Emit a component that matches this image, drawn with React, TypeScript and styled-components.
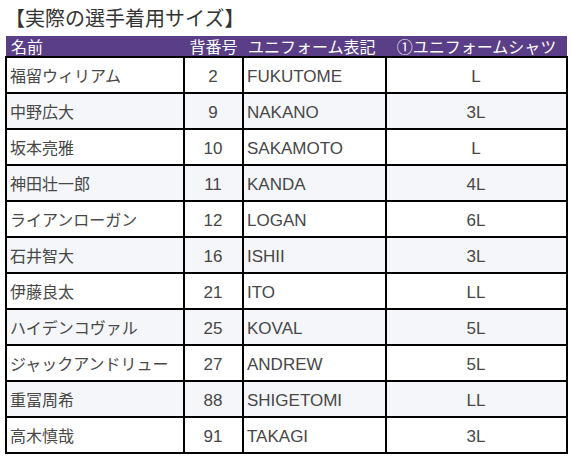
import React from 'react';
import styled, { createGlobalStyle } from 'styled-components';

interface Player {
  name: string;
  number: number;
  label: string;
  size: string;
}

const players: Player[] = [
  { name: '福留ウィリアム', number: 2, label: 'FUKUTOME', size: 'L' },
  { name: '中野広大', number: 9, label: 'NAKANO', size: '3L' },
  { name: '坂本亮雅', number: 10, label: 'SAKAMOTO', size: 'L' },
  { name: '神田壮一郎', number: 11, label: 'KANDA', size: '4L' },
  { name: 'ライアンローガン', number: 12, label: 'LOGAN', size: '6L' },
  { name: '石井智大', number: 16, label: 'ISHII', size: '3L' },
  { name: '伊藤良太', number: 21, label: 'ITO', size: 'LL' },
  { name: 'ハイデンコヴァル', number: 25, label: 'KOVAL', size: '5L' },
  { name: 'ジャックアンドリュー', number: 27, label: 'ANDREW', size: '5L' },
  { name: '重冨周希', number: 88, label: 'SHIGETOMI', size: 'LL' },
  { name: '高木慎哉', number: 91, label: 'TAKAGI', size: '3L' },
];

const GlobalStyle = createGlobalStyle`
  body {
    margin: 0;
    background: #ffffff;
    font-family: "Noto Sans CJK JP", "Noto Sans", sans-serif;
  }
`;

const App = () => {
  return (
    <Page>
      <GlobalStyle />
      <Title>【実際の選手着用サイズ】</Title>
      <SizeTable>
        <colgroup>
          <col style={{ width: 178 }} />
          <col style={{ width: 59 }} />
          <col style={{ width: 143 }} />
          <col style={{ width: 181 }} />
        </colgroup>
        <thead>
          <tr>
            <HeadCell align="left">名前</HeadCell>
            <HeadCell align="center">背番号</HeadCell>
            <HeadCell align="left">ユニフォーム表記</HeadCell>
            <HeadCell align="center">①ユニフォームシャツ</HeadCell>
          </tr>
        </thead>
        <tbody>
          {players.map((p, i) => (
            <Row key={p.label} $shaded={i % 2 === 1}>
              <Cell align="left">{p.name}</Cell>
              <Cell align="center" $latin>{p.number}</Cell>
              <Cell align="left" $latin>{p.label}</Cell>
              <Cell align="center" $latin>{p.size}</Cell>
            </Row>
          ))}
        </tbody>
      </SizeTable>
    </Page>
  );
};

export default App;

const Page = styled.div`
  padding: 6px 4px 0 5px;
`;

const Title = styled.div`
  font-size: 20px;
  line-height: 24px;
  color: #333;
  margin-bottom: 6px;
`;

const SizeTable = styled.table`
  border-collapse: collapse;
  table-layout: fixed;
  width: 562px;
  color: #474747;
`;

const HeadCell = styled.th<{ align: string }>`
  background: #5a3e88;
  color: #ffffff;
  font-weight: normal;
  font-size: 16px;
  line-height: 20px;
  height: 20px;
  padding: 0 5px;
  white-space: nowrap;
  text-align: ${(p) => p.align};
`;

const Row = styled.tr<{ $shaded: boolean }>`
  background: ${(p) => (p.$shaded ? '#f5f6f9' : '#ffffff')};
`;

const Cell = styled.td<{ align: string; $latin?: boolean }>`
  border: 2px solid #000;
  height: ${(p) => (p.$latin ? '31px' : '34px')};
  padding: ${(p) => (p.$latin ? '3px 4px 0 3px' : '0 4px 0 3px')};
  font-family: ${(p) => (p.$latin ? '"Liberation Sans", "Noto Sans CJK JP", sans-serif' : 'inherit')};
  font-size: ${(p) => (p.$latin ? '17px' : '16px')};
  line-height: 20px;
  white-space: nowrap;
  text-align: ${(p) => p.align};
`;
